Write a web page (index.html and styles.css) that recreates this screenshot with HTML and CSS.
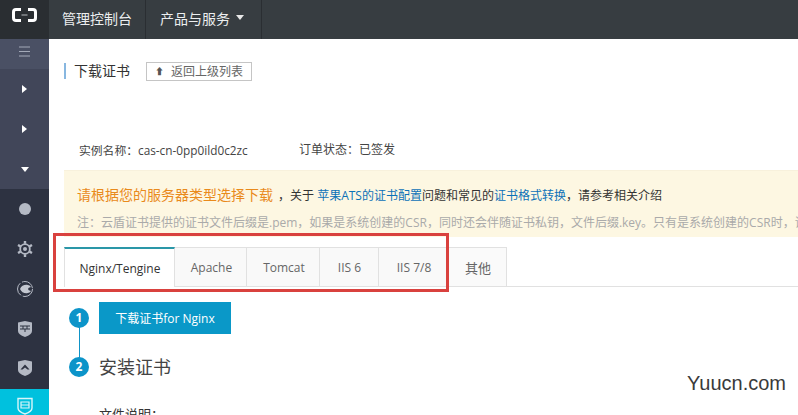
FILE: index.html
```html
<!DOCTYPE html>
<html lang="zh">
<head>
<meta charset="utf-8">
<title>下载证书</title>
<link rel="stylesheet" href="styles.css">
</head>
<body>
<header class="topbar">
  <div class="logo">
    <svg width="25" height="14" viewBox="0 0 25 14"><path d="M9 1.500H4Q1.500 1.500 1.500 4V10Q1.500 12.500 4 12.500H9M16 1.500H21Q23.500 1.500 23.500 4V10Q23.500 12.500 21 12.500H16" fill="none" stroke="#fff" stroke-width="3"/><path d="M9.500 7H15.500" stroke="#8a8e92" stroke-width="1.500"/></svg>
  </div>
  <nav class="topnav">
    <a class="topnav-item">管理控制台</a>
    <a class="topnav-item">产品与服务<span class="caret"></span></a>
  </nav>
</header>
<div class="body-row">
  <aside class="sidebar">
    <div class="side-toggle">
      <svg width="11" height="11" viewBox="0 0 11 11"><path d="M0 1H11M0 5.500H11M0 10H11" stroke="#a3a9b8" stroke-width="1"/></svg>
    </div>
    <div class="side-group">
      <div class="side-arrow"><span class="tri-right"></span></div>
      <div class="side-arrow"><span class="tri-right"></span></div>
      <div class="side-arrow"><span class="tri-down"></span></div>
    </div>
    <div class="side-icons">
      <div class="side-icon"><svg width="18" height="18" viewBox="0 0 18 18"><circle cx="9" cy="9" r="6" fill="#b4b9c4"/></svg></div>
      <div class="side-icon"><svg width="18" height="18" viewBox="0 0 18 18"><circle cx="9" cy="9" r="4.800" fill="none" stroke="#b4b9c4" stroke-width="1.800"/><circle cx="9" cy="9" r="2" fill="#b4b9c4"/><path d="M9 1V3.800M9 14.200V17M2 5L4.500 6.400M13.500 11.600L16 13M2 13L4.500 11.600M13.500 6.400L16 5" stroke="#b4b9c4" stroke-width="2.400"/></svg></div>
      <div class="side-icon"><svg width="18" height="18" viewBox="0 0 18 18"><circle cx="9" cy="9" r="7.500" fill="none" stroke="#b4b9c4" stroke-width="1" stroke-dasharray="14 2"/><path d="M4 9Q6 4.500 11 4.800Q14 5.200 15 7Q12 7.500 12 9Q12 10.500 15 11Q14 12.800 11 13.200Q6 13.500 4 9Z" fill="#c3c7d0"/></svg></div>
      <div class="side-icon"><svg width="16" height="18" viewBox="0 0 16 18"><path d="M1 2.500L8 1L15 2.500V11Q15 14.500 8 17Q1 14.500 1 11Z" fill="#b4b9c4"/><path d="M3 6H13M3 9H13M6 6V9M10 6V9M8 9V12" stroke="#2d3241" stroke-width="1"/></svg></div>
      <div class="side-icon side-icon-up"><svg width="16" height="18" viewBox="0 0 16 18"><path d="M1 2.500L8 1L15 2.500V11Q15 14.500 8 17Q1 14.500 1 11Z" fill="#b4b9c4"/><path d="M3.500 10.500L8 5.500L12.500 10.500L10.500 10.500L8 8.500L5.500 10.500Z" fill="#2d3241"/></svg></div>
      <div class="side-icon active"><svg width="16" height="18" viewBox="0 0 16 18"><path d="M1 1.500H15V11Q15 14.500 8 17Q1 14.500 1 11Z" fill="none" stroke="#d9f6fa" stroke-width="1.400"/><path d="M4 5H12V11H4ZM4 8H12" fill="none" stroke="#d9f6fa" stroke-width="1.200"/></svg></div>
    </div>
  </aside>
  <main class="content">
    <div class="title-row">
      <h1 class="page-title">下载证书</h1>
      <a class="back-btn"><span class="back-icon">⬆</span>返回上级列表</a>
    </div>
    <div class="meta-row">
      <span class="meta-name">实例名称：cas-cn-0pp0ild0c2zc</span>
      <span>订单状态：已签发</span>
    </div>
    <section class="notice">
      <p class="notice-main"><span class="notice-em">请根据您的服务器类型选择下载</span>，关于 <a class="link">苹果ATS的证书配置</a>问题和常见的<a class="link">证书格式转换</a>，请参考相关介绍</p>
      <p class="notice-sub">注：云盾证书提供的证书文件后缀是.pem，如果是系统创建的CSR，同时还会伴随证书私钥，文件后缀.key。只有是系统创建的CSR时，证</p>
    </section>
    <div class="tabs">
      <a class="tab tab-active">Nginx/Tengine</a>
      <a class="tab tab-a">Apache</a>
      <a class="tab tab-t">Tomcat</a>
      <a class="tab tab-6">IIS 6</a>
      <a class="tab tab-7">IIS 7/8</a>
      <a class="tab tab-o">其他</a>
    </div>
    <div class="steps">
      <div class="step step-one">
        <span class="step-num">1</span>
        <a class="dl-btn">下载证书for Nginx</a>
      </div>
      <div class="step step-two">
        <span class="step-num">2</span>
        <h2 class="step-title">安装证书</h2>
      </div>
      <p class="file-desc">文件说明：</p>
    </div>
    <div class="highlight"></div>
  </main>
</div>
<div class="watermark">Yuucn.com</div>
</body>
</html>
```
FILE: styles.css
```css
* { box-sizing: border-box; }
html, body { margin: 0; padding: 0; height: 415px; overflow: hidden; background: #fff; }
body { position: relative; width: 798px; font-family: "Open Sans", "Noto Sans CJK SC", sans-serif; font-size: 12px; color: #333; }
a { text-decoration: none; }
h1, h2, p { margin: 0; font-weight: normal; }

.topbar { display: flex; height: 39px; background: #373d41; }
.logo { width: 49px; flex: none; display: flex; align-items: center; justify-content: center; background: #2a2e32; padding-bottom: 10px; }
.topnav { display: flex; }
.topnav-item { display: flex; align-items: center; padding: 0 13px 4px 13px; color: #eceeef; font-size: 14px; border-right: 1px solid #2a2e32; }
.topnav-item:nth-child(2) { padding-left: 14px; padding-right: 17px; }
.caret { margin-left: 6px; border: 4.500px solid transparent; border-top: 5px solid #e8e8e8; border-bottom: 0; }

.body-row { display: flex; height: 376px; }
.sidebar { width: 49px; flex: none; display: flex; flex-direction: column; background: #2d3241; overflow: hidden; }
.side-toggle { height: 30px; flex: none; display: flex; align-items: center; justify-content: center; background: #4a5064; padding-bottom: 5px; }
.side-group { height: 120px; flex: none; background: #414659; }
.side-arrow { height: 40px; display: flex; align-items: center; justify-content: center; }
.tri-right { border: 4.500px solid transparent; border-left: 5px solid #fff; border-right: 0; }
.tri-down { border: 4.500px solid transparent; border-top: 5px solid #fff; border-bottom: 0; }
.side-icons { display: flex; flex-direction: column; flex: none; }
.side-icon { height: 40px; flex: none; display: flex; align-items: center; justify-content: center; }
.side-icon-up { padding-bottom: 2px; }
.side-icon.active { background: #00c1de; padding-bottom: 6px; }

.content { flex: 1; position: relative; min-width: 0; overflow: hidden; padding-left: 15px; }
.title-row { display: flex; align-items: center; height: 18px; margin-top: 23px; }
.page-title { border-left: 2px solid #88b7e0; padding-left: 8px; font-size: 14px; line-height: 16px; color: #333; width: 82px; }
.back-btn { display: flex; align-items: center; height: 19px; padding: 0 8px; width: 106px; white-space: nowrap; border: 1px solid #c5c5c5; color: #666; font-size: 12px; }
.back-icon { font-size: 9px; margin-right: 7px; color: #555; }

.meta-row { display: flex; margin: 61px 0 0 15px; height: 18px; line-height: 18px; color: #444; }
.meta-name { width: 220px; font-size: 11.800px; }

.notice { margin-top: 11px; height: 67px; width: 900px; background: #fdf7e2; border-top: 1px solid #f8f1dc; padding: 15px 0 0 13px; white-space: nowrap; overflow: hidden; }
.notice-main { line-height: 18px; color: #333; }
.notice-em { color: #e98a1c; font-size: 14px; margin-right: 5px; }
.link { color: #0d72b8; }
.notice-sub { margin-top: 9px; line-height: 18px; color: #aaa; }

.tabs { display: flex; height: 40px; margin-top: 10px; width: 900px; border-bottom: 1px solid #e1e1e1; }
.tab { height: 40px; display: flex; align-items: center; justify-content: center; background: #f9f9f9; border: 1px solid #e1e1e1; border-left: 0; color: #666; font-size: 12px; padding-left: 1px; }
.tab-active { width: 111px; background: #fff; color: #333; border-top: 2px solid #2a97a8; border-left: 1px solid #e1e1e1; border-bottom: 0; }
.tab-a { width: 72px; padding-left: 2px; }
.tab-t { width: 73px; padding-left: 2px; }
.tab-6 { width: 59px; }
.tab-7 { width: 70px; }
.tab-o { width: 58px; background: #fafafa; font-size: 13px; }

.steps { position: relative; padding-left: 5px; margin-top: 15px; }
.step { display: flex; align-items: center; gap: 10px; }
.step-one { height: 32px; }
.step-two { margin-top: 20px; height: 26px; position: relative; }
.step-two::before { content: ""; position: absolute; left: 10px; top: -28px; width: 1px; height: 32px; background: #0f93c7; }
.step-num { position: relative; width: 20px; height: 20px; border-radius: 50%; background: #0c94c9; color: #fff; font: bold 12px/20px "Open Sans", sans-serif; text-align: center; flex: none; }
.dl-btn { width: 132px; height: 32px; display: flex; align-items: center; justify-content: center; background: #0a98c8; color: #fff; font-size: 12px; }
.step-title { font-size: 18px; line-height: 26px; color: #444; }
.file-desc { margin: 24px 0 0 30px; font-size: 13px; color: #333; }

.highlight { position: absolute; left: 4px; top: 194px; width: 396px; height: 59px; border: 3px solid #d9413e; pointer-events: none; }
.watermark { position: absolute; right: 12px; bottom: 20px; font: 20px "Liberation Sans", sans-serif; color: #3a3a3a; }
```
